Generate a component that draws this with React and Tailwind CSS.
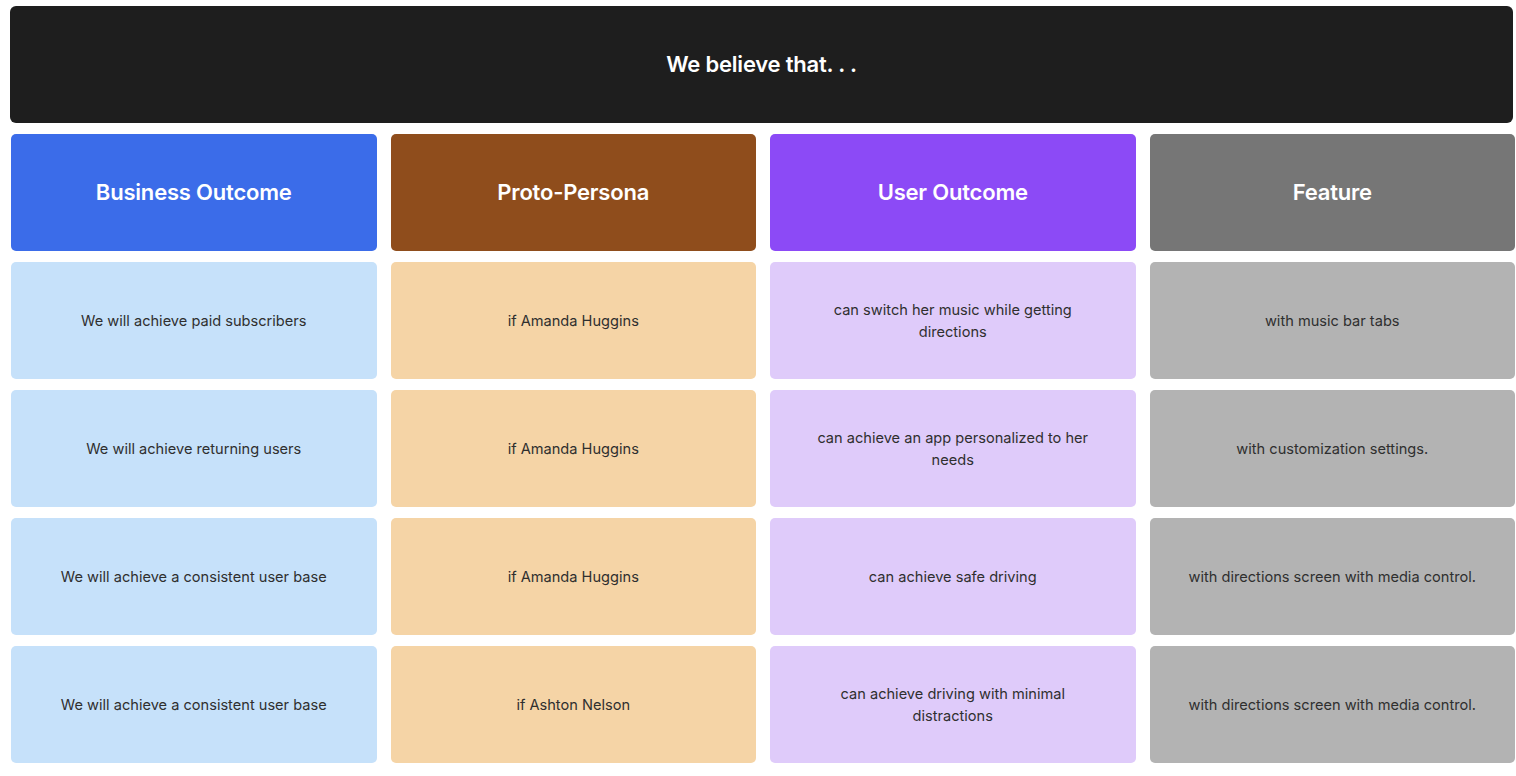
import React from 'react';

const headers = [
  { title: 'Business Outcome', head: 'bg-[#3b6ce9]', cell: 'bg-[#c6e1fa]' },
  { title: 'Proto-Persona', head: 'bg-[#8f4d1c]', cell: 'bg-[#f5d4a6]' },
  { title: 'User Outcome', head: 'bg-[#8c4af6]', cell: 'bg-[#dfcbfa]' },
  { title: 'Feature', head: 'bg-[#767676]', cell: 'bg-[#b3b3b3]' },
];

const rows = [
  [
    'We will achieve paid subscribers',
    'if Amanda Huggins',
    ['can switch her music while getting', 'directions'],
    'with music bar tabs',
  ],
  [
    'We will achieve returning users',
    'if Amanda Huggins',
    ['can achieve an app personalized to her', 'needs'],
    'with customization settings.',
  ],
  [
    'We will achieve a consistent user base',
    'if Amanda Huggins',
    'can achieve safe driving',
    'with directions screen with media control.',
  ],
  [
    'We will achieve a consistent user base',
    'if Ashton Nelson',
    ['can achieve driving with minimal', 'distractions'],
    'with directions screen with media control.',
  ],
];

const Cell = ({ text, color }) => (
  <div className={`h-[117px] rounded-[5px] flex items-center justify-center text-center text-[14.6px] leading-[22px] text-[#2f2f2f] ${color}`}>
    {Array.isArray(text) ? (
      <p>
        {text[0]}
        <br />
        {text[1]}
      </p>
    ) : (
      <p className="whitespace-nowrap">{text}</p>
    )}
  </div>
);

const App = () => {
  return (
    <div
      className="w-[1516px] h-[776px] bg-white overflow-hidden pt-[6px] pl-[10px] pr-[2px]"
      style={{ fontFamily: 'Inter, "Noto Sans", sans-serif' }}
    >
      <div className="h-[117px] w-[1503px] rounded-[6px] bg-[#1e1e1e] flex items-center justify-center">
        <h1 className="text-white text-[22px] font-semibold tracking-[-0.2px]">We believe that. . .</h1>
      </div>

      <div className="mt-[11px] ml-[1px] w-[1504px] grid grid-cols-4 gap-x-[14px] gap-y-[11px]">
        {headers.map((h) => (
          <div
            key={h.title}
            className={`h-[117px] rounded-[5px] flex items-center justify-center ${h.head}`}
          >
            <h2 className="text-white text-[22px] font-semibold tracking-[-0.2px]">{h.title}</h2>
          </div>
        ))}
        {rows.map((row, i) =>
          row.map((text, j) => <Cell key={`${i}-${j}`} text={text} color={headers[j].cell} />)
        )}
      </div>
    </div>
  );
};

export default App;
